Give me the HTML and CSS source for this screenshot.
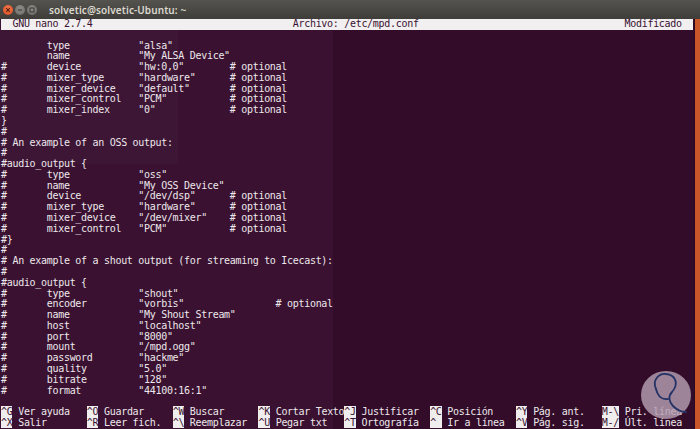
FILE: index.html
```html
<!DOCTYPE html>
<html lang="es">
<head>
<meta charset="utf-8">
<title>solvetic@solvetic-Ubuntu: ~</title>
<link rel="stylesheet" href="styles.css">
</head>
<body>
<div class="window">
  <header class="titlebar">
    <div class="buttons">
      <span class="btn close"><svg viewBox="0 0 10 10" width="10" height="10"><path d="M3.2 3.2 L6.8 6.8 M6.8 3.2 L3.2 6.8" stroke="#5a1d0e" stroke-width="1.1"/></svg></span>
      <span class="btn min"><svg viewBox="0 0 10 10" width="10" height="10"><path d="M3 5 H7" stroke="#3b3a36" stroke-width="1.1"/></svg></span>
      <span class="btn max"><svg viewBox="0 0 10 10" width="10" height="10"><rect x="3" y="3" width="4" height="4" fill="none" stroke="#3b3a36" stroke-width="1"/></svg></span>
    </div>
    <div class="title">solvetic@solvetic-Ubuntu: ~</div>
  </header>
  <div class="main">
    <div class="term">
      <div class="row inv">  GNU nano 2.7.4                                   Archivo: /etc/mpd.conf                                    Modificado  </div>
<pre class="buf">        type            "alsa"
        name            "My ALSA Device"
#       device          "hw:0,0"        # optional
#       mixer_type      "hardware"      # optional
#       mixer_device    "default"       # optional
#       mixer_control   "PCM"           # optional
#       mixer_index     "0"             # optional
}
#
# An example of an OSS output:
#
#audio_output {
#       type            "oss"
#       name            "My OSS Device"
#       device          "/dev/dsp"      # optional
#       mixer_type      "hardware"      # optional
#       mixer_device    "/dev/mixer"    # optional
#       mixer_control   "PCM"           # optional
#}
#
# An example of a shout output (for streaming to Icecast):
#
#audio_output {
#       type            "shout"
#       encoder         "vorbis"                # optional
#       name            "My Shout Stream"
#       host            "localhost"
#       port            "8000"
#       mount           "/mpd.ogg"
#       password        "hackme"
#       quality         "5.0"
#       bitrate         "128"
#       format          "44100:16:1"</pre>
      <div class="row"><span class="k">^G</span> Ver ayuda   <span class="k">^O</span> Guardar     <span class="k">^W</span> Buscar      <span class="k">^K</span> Cortar Texto<span class="k">^J</span> Justificar  <span class="k">^C</span> Posición    <span class="k">^Y</span> Pág. ant.   <span class="k">M-\</span> Pri. línea</div>
      <div class="row"><span class="k">^X</span> Salir       <span class="k">^R</span> Leer fich.  <span class="k">^\</span> Reemplazar  <span class="k">^U</span> Pegar txt   <span class="k">^T</span> Ortografía  <span class="k">^_</span> Ir a línea  <span class="k">^V</span> Pág. sig.   <span class="k">M-/</span> Últ. línea</div>
      <svg class="logo" viewBox="0 0 54 50" width="54" height="50">
        <ellipse cx="26" cy="24" rx="25" ry="24" fill="#b49fb1" fill-opacity="0.82"/>
        <path d="M16 18 C12 9 19 2 26 3 C36 4 39 13 32 21 C28 25 29 31 33 35 C37 39 42 41 46 41" fill="none" stroke="#243266" stroke-width="1.8" stroke-linecap="round"/>
        <path d="M16 18 C18 26 23 29 28 28" fill="none" stroke="#243266" stroke-width="1.8" stroke-linecap="round"/>
      </svg>
    </div>
    <div class="edge"></div>
  </div>
</div>
</body>
</html>
```
FILE: styles.css
```css
html, body {
  margin: 0;
  padding: 0;
  background: #3a1130;
}
.window {
  width: 700px;
  height: 429px;
  display: flex;
  flex-direction: column;
  overflow: hidden;
}
.titlebar {
  height: 19px;
  flex: none;
  display: flex;
  align-items: center;
  background: linear-gradient(#55534e, #3e3d39);
}
.buttons {
  display: flex;
  gap: 2px;
  padding-left: 3px;
}
.btn {
  width: 10px;
  height: 10px;
  border-radius: 50%;
  display: flex;
}
.btn.close {
  background: radial-gradient(circle at 50% 35%, #f27a50, #d84a1c);
}
.btn.min, .btn.max {
  background: radial-gradient(circle at 50% 35%, #8e8d87, #6c6b66);
}
.title {
  margin-left: 12px;
  font-family: "Noto Sans", sans-serif;
  font-weight: 600;
  font-size: 10px;
  color: #dcd8cf;
  letter-spacing: 0.1px;
}
.main {
  flex: 1;
  display: flex;
}
.term {
  position: relative;
  width: 693px;
  padding-left: 1px;
  flex: none;
  font-family: "DejaVu Sans Mono", "Liberation Mono", monospace;
  font-size: 10px;
  letter-spacing: -0.3px;
  line-height: 10.78px;
  color: #ede8ec;
  background:
    linear-gradient(#3d1535, #3d1535) 0 11px / 178px 134px no-repeat,
    linear-gradient(to right, #3a1130 0 333px, #320c29 333px);
}
.row {
  white-space: pre;
  height: 10.78px;
}
.row.inv {
  width: 692px;
  background: #f1eff0;
  color: #3a1130;
}
.buf {
  margin: 0;
  padding: 10.78px 0;
  font: inherit;
  letter-spacing: inherit;
  line-height: 10.78px;
}
.k {
  background: #efedee;
  color: #3a1130;
}
.logo {
  position: absolute;
  left: 640px;
  top: 352px;
  pointer-events: none;
}
.edge {
  flex: 1;
  background: linear-gradient(to right, #2a0a22 0 1px, #c9572a 1px);
}
```
